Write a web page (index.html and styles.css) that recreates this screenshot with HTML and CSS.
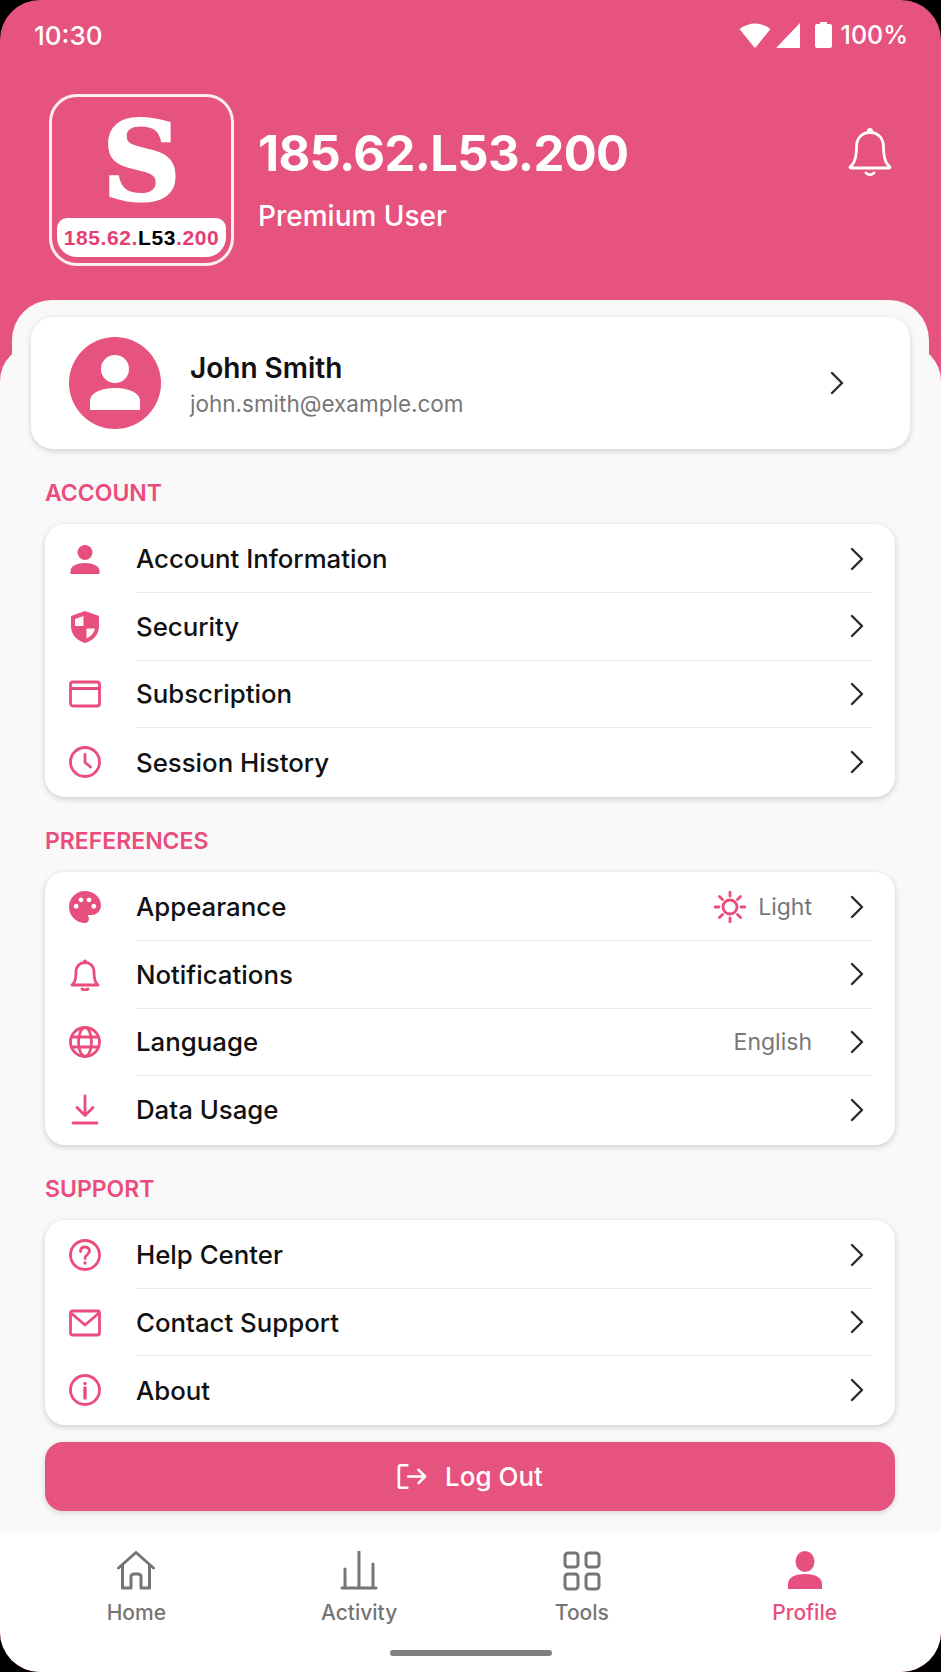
FILE: index.html
```html
<!DOCTYPE html>
<html lang="en">
<head>
    <meta charset="UTF-8">
    <meta name="viewport" content="width=device-width, initial-scale=1.0">
    <title>Profile</title>
    <link rel="stylesheet" href="styles.css">
</head>
<body>
    <div class="phone">
        <header class="header">
            <div class="status-bar">
                <span class="status-time">10:30</span>
                <div class="status-icons">
                    <svg width="32" height="26" viewBox="0 0 32 26"><path class="fill" d="M0.5 7 Q16 -4 31.5 7 L17 25 Q16 26 15 25 Z"/></svg>
                    <svg width="24" height="25" viewBox="0 0 24 25"><path class="fill" d="M24 0 V25 H1 Q0 25 1 24 Z"/></svg>
                    <svg class="battery" width="17" height="26" viewBox="0 0 17 26"><path class="fill" d="M5 2 V1 Q5 0 6 0 H11 Q12 0 12 1 V2 H15 Q17 2 17 4 V24 Q17 26 15 26 H2 Q0 26 0 24 V4 Q0 2 2 2 Z"/></svg>
                    <span>100%</span>
                </div>
            </div>
            <div class="brand">
                <div class="logo">
                    <div class="logo-letter">S</div>
                    <div class="logo-pill">185.62.<b>L53</b>.200</div>
                </div>
                <div class="brand-text">
                    <h1>185.62.L53.200</h1>
                    <p>Premium User</p>
                </div>
                <svg class="bell-top" width="44" height="50" viewBox="0 0 44 50">
                    <path class="line-white" d="M2 40 Q3 39 4.500 37.500 C8 33 8.500 28 8.500 20 C8.500 11 14 5.500 22 5.500 S35.500 11 35.500 20 C35.500 28 36 33 39.500 37.500 Q41 39 42 40 Q42 41 41 41 H3 Q2 41 2 40 Z"/>
                    <circle class="fill" cx="22" cy="4" r="3"/>
                    <path class="line-white" d="M18 46 Q22 49.500 26 46"/>
                </svg>
            </div>
        </header>

        <main class="sheet">
            <div class="profile-card">
                <div class="avatar">
                    <svg width="52" height="55" viewBox="0 0 52 55">
                        <ellipse class="fill" cx="26" cy="14" rx="14" ry="14"/>
                        <path class="fill" d="M1 55 V46 C1 38 12 33 26 33 S51 38 51 46 V55 Z"/>
                    </svg>
                </div>
                <div class="profile-text">
                    <div class="profile-name">John Smith</div>
                    <div class="profile-email">john.smith@example.com</div>
                </div>
                <svg class="chevron" viewBox="0 0 14 24"><path d="M2 2 L12 12 L2 22"/></svg>
            </div>

            <h2 class="section-label">ACCOUNT</h2>
            <section class="card">
                <div class="row">
                    <svg class="icon" viewBox="0 0 32 32"><circle class="solid" cx="16" cy="9.500" r="7.500"/><path class="solid" d="M1.500 31 V28 C1.500 23 8 20 16 20 S30.500 23 30.500 28 V31 Z"/></svg>
                    <div class="row-body"><span class="row-title">Account Information</span><svg class="chevron" viewBox="0 0 14 24"><path d="M2 2 L12 12 L2 22"/></svg></div>
                </div>
                <div class="row">
                    <svg class="icon" viewBox="0 0 32 32"><path class="solid" d="M16 0 L30 5 V15 C30 24 24 29.500 16 32 C8 29.500 2 24 2 15 V5 Z"/><path class="knock" d="M14.500 5 L6 8 V15 H14.500 Z M17.500 17.500 H26 C25 22 22 25.500 17.500 27.500 Z"/></svg>
                    <div class="row-body"><span class="row-title">Security</span><svg class="chevron" viewBox="0 0 14 24"><path d="M2 2 L12 12 L2 22"/></svg></div>
                </div>
                <div class="row">
                    <svg class="icon" viewBox="0 0 32 32"><rect class="line" x="1.500" y="4" width="29" height="24" rx="2.500"/><path class="line" d="M1.500 10.500 H30.500"/></svg>
                    <div class="row-body"><span class="row-title">Subscription</span><svg class="chevron" viewBox="0 0 14 24"><path d="M2 2 L12 12 L2 22"/></svg></div>
                </div>
                <div class="row">
                    <svg class="icon" viewBox="0 0 32 32"><circle class="line" cx="16" cy="16" r="14.500"/><path class="line" d="M16 8.500 V16.500 L21.500 21"/></svg>
                    <div class="row-body"><span class="row-title">Session History</span><svg class="chevron" viewBox="0 0 14 24"><path d="M2 2 L12 12 L2 22"/></svg></div>
                </div>
            </section>

            <h2 class="section-label">PREFERENCES</h2>
            <section class="card">
                <div class="row">
                    <svg class="icon" viewBox="2 2 20 20"><path class="solid" d="M12 2C6.490 2 2 6.490 2 12s4.490 10 10 10c1.380 0 2.500-1.120 2.500-2.500 0-.610-.230-1.200-.640-1.670-.080-.100-.130-.210-.130-.330 0-.280.220-.500.500-.500H16c3.310 0 6-2.690 6-6 0-4.960-4.490-9-10-9zm5.500 11c-.830 0-1.500-.670-1.500-1.500s.670-1.500 1.500-1.500 1.500.670 1.500 1.500-.670 1.500-1.500 1.500zm-3-4c-.830 0-1.500-.670-1.500-1.500S13.670 6 14.500 6s1.500.670 1.500 1.500S15.330 9 14.500 9zM5 11.500c0-.830.670-1.500 1.500-1.500s1.500.670 1.500 1.500S7.330 13 6.500 13 5 12.330 5 11.500zm6-4c0 .830-.670 1.500-1.500 1.500S8 8.330 8 7.500 8.670 6 9.500 6s1.500.670 1.500 1.500z"/></svg>
                    <div class="row-body">
                        <span class="row-title">Appearance</span>
                        <svg class="sun" viewBox="0 0 32 32"><circle class="line" cx="16" cy="16" r="7"/><path class="line" d="M16 1 V5 M16 27 V31 M1 16 H5 M27 16 H31 M5.500 5.500 L8.500 8.500 M23.500 23.500 L26.500 26.500 M5.500 26.500 L8.500 23.500 M23.500 8.500 L26.500 5.500"/></svg>
                        <span class="row-value">Light</span>
                        <svg class="chevron" viewBox="0 0 14 24"><path d="M2 2 L12 12 L2 22"/></svg>
                    </div>
                </div>
                <div class="row">
                    <svg class="icon" viewBox="0 0 32 32"><path class="line" d="M3 26 Q7 23 7 13 C7 7 11 3.500 16 3.500 S25 7 25 13 Q25 23 29 26 Z"/><circle class="solid" cx="16" cy="2.500" r="2"/><path class="line" d="M13 30 Q16 32 19 30"/></svg>
                    <div class="row-body"><span class="row-title">Notifications</span><svg class="chevron" viewBox="0 0 14 24"><path d="M2 2 L12 12 L2 22"/></svg></div>
                </div>
                <div class="row">
                    <svg class="icon" viewBox="0 0 32 32"><circle class="line" cx="16" cy="16" r="14.500"/><ellipse class="line" cx="16" cy="16" rx="6.500" ry="14.500"/><path class="line" d="M2.500 11 H29.500 M2.500 21 H29.500"/></svg>
                    <div class="row-body">
                        <span class="row-title">Language</span>
                        <span class="row-value">English</span>
                        <svg class="chevron" viewBox="0 0 14 24"><path d="M2 2 L12 12 L2 22"/></svg>
                    </div>
                </div>
                <div class="row">
                    <svg class="icon" viewBox="0 0 32 32"><path class="line" d="M16 2 V21 M8 13.500 L16 21.500 L24 13.500 M4 29 H28"/></svg>
                    <div class="row-body"><span class="row-title">Data Usage</span><svg class="chevron" viewBox="0 0 14 24"><path d="M2 2 L12 12 L2 22"/></svg></div>
                </div>
            </section>

            <h2 class="section-label">SUPPORT</h2>
            <section class="card">
                <div class="row">
                    <svg class="icon" viewBox="0 0 32 32"><circle class="line" cx="16" cy="16" r="14.500"/><path class="line" d="M11.500 12.500 C11.500 9.500 13.500 8 16 8 S20.500 9.500 20.500 12 C20.500 15.500 16 15.500 16 19.500"/><circle class="solid" cx="16" cy="24" r="1.700"/></svg>
                    <div class="row-body"><span class="row-title">Help Center</span><svg class="chevron" viewBox="0 0 14 24"><path d="M2 2 L12 12 L2 22"/></svg></div>
                </div>
                <div class="row">
                    <svg class="icon" viewBox="0 0 32 32"><rect class="line" x="1.500" y="4" width="29" height="24" rx="2"/><path class="line" d="M2 6 L16 18 L30 6"/></svg>
                    <div class="row-body"><span class="row-title">Contact Support</span><svg class="chevron" viewBox="0 0 14 24"><path d="M2 2 L12 12 L2 22"/></svg></div>
                </div>
                <div class="row">
                    <svg class="icon" viewBox="0 0 32 32"><circle class="line" cx="16" cy="16" r="14.500"/><circle class="solid" cx="16" cy="9.500" r="1.800"/><path class="line thick" d="M16 14 V24"/></svg>
                    <div class="row-body"><span class="row-title">About</span><svg class="chevron" viewBox="0 0 14 24"><path d="M2 2 L12 12 L2 22"/></svg></div>
                </div>
            </section>

            <button class="logout">
                <svg width="30" height="27" viewBox="0 0 32 28"><path class="line-white" d="M11 2 H4 Q2 2 2 4 V24 Q2 26 4 26 H11 M12 14 H30 M23 7 L30 14 L23 21"/></svg>
                Log Out
            </button>
        </main>

        <nav class="bottom-nav">
            <div class="nav-list">
                <div class="nav-item">
                    <svg class="nav-icon" viewBox="0 0 40 40"><path class="line-gray" d="M2.500 17 L20 1.500 L37.500 17 M6.500 14 V37 H15 V26 Q15 23 18 23 H22 Q25 23 25 26 V37 H33.500 V14"/></svg>
                    <span>Home</span>
                </div>
                <div class="nav-item">
                    <svg class="nav-icon" viewBox="0 0 40 40"><path class="line-gray" d="M3 37 H37 M6 18 V37 M20 1 V37 M34 13 V37"/></svg>
                    <span>Activity</span>
                </div>
                <div class="nav-item">
                    <svg class="nav-icon" viewBox="0 0 40 40"><rect class="line-gray" x="3" y="2" width="13" height="14" rx="3"/><rect class="line-gray" x="24" y="2" width="13" height="14" rx="3"/><rect class="line-gray" x="3" y="23" width="13" height="15" rx="3"/><rect class="line-gray" x="24" y="23" width="13" height="15" rx="3"/></svg>
                    <span>Tools</span>
                </div>
                <div class="nav-item active">
                    <svg class="nav-icon" viewBox="0 0 40 40"><ellipse class="solid" cx="20" cy="10.500" rx="9.500" ry="10.500"/><path class="solid" d="M3 38 V33 C3 27 9 23 20 23 S37 27 37 33 V38 Z"/></svg>
                    <span>Profile</span>
                </div>
            </div>
            <div class="home-indicator"></div>
        </nav>
    </div>
</body>
</html>
```

FILE: styles.css
```css
body {
    margin: 0;
    background-color: #000;
    font-family: 'Inter', 'Noto Sans', sans-serif;
    color: #111;
}

.phone {
    width: 941px;
    height: 1672px;
    background-color: #e7537f;
    border-radius: 40px;
    overflow: hidden;
    display: flex;
    flex-direction: column;
}

/* header */
.header {
    height: 345px;
    flex-shrink: 0;
    color: white;
}

.status-bar {
    display: flex;
    justify-content: space-between;
    align-items: center;
    height: 26px;
    padding: 22px 33px 0 34px;
    font-size: 25px;
    font-weight: 500;
}

.status-time {
    font-size: 26px;
}

.status-icons {
    display: flex;
    align-items: center;
    gap: 5px;
}

.status-icons .battery {
    margin: 0 4px 0 10px;
}

.brand {
    display: flex;
    align-items: center;
    margin-top: 46px;
    padding: 0 49px;
}

.logo {
    width: 179px;
    height: 166px;
    flex-shrink: 0;
    border: 3px solid rgba(255, 255, 255, 0.9);
    border-radius: 28px;
    display: flex;
    flex-direction: column;
    align-items: center;
}

.logo-letter {
    height: 114px;
    padding-top: 7px;
    font-family: 'DejaVu Serif', serif;
    font-weight: bold;
    font-size: 108px;
    line-height: 114px;
    color: white;
    -webkit-text-stroke: 3px white;
}

.logo-pill {
    width: 169px;
    height: 39px;
    background-color: white;
    border-radius: 10px 10px 20px 20px;
    text-align: center;
    font-family: 'Liberation Sans', sans-serif;
    font-weight: bold;
    font-size: 21px;
    line-height: 39px;
    letter-spacing: 0.6px;
    color: #e63e72;
}

.logo-pill b {
    color: #000;
}

.brand-text {
    flex: 1;
    margin: 0 0 4px 24px;
}

.brand-text h1 {
    margin: 0;
    font-size: 49px;
    font-weight: 700;
    line-height: 58px;
    letter-spacing: -0.7px;
}

.brand-text p {
    margin: 17px 0 0;
    font-size: 28px;
    font-weight: 500;
    line-height: 32px;
}

.bell-top {
    align-self: flex-start;
    margin-top: 33px;
}

.fill {
    fill: white;
}

.line-white {
    fill: none;
    stroke: white;
    stroke-width: 2.8;
    stroke-linecap: round;
    stroke-linejoin: round;
}

/* sheet with the lists */
.sheet {
    flex: 1;
    position: relative;
    background-color: #f9f9f9;
    border-radius: 36px 36px 0 0;
    padding: 0 46px 0 45px;
}

.sheet::before {
    content: '';
    position: absolute;
    top: -45px;
    left: 12px;
    right: 12px;
    height: 120px;
    background-color: #f9f9f9;
    border-radius: 40px 40px 0 0;
}

.profile-card {
    position: relative;
    display: flex;
    align-items: center;
    height: 132px;
    margin: -28px -15px 0 -14px;
    padding: 0 66px 0 38px;
    background-color: white;
    border-radius: 22px;
    box-shadow: 0 2px 6px rgba(0, 0, 0, 0.16);
}

.avatar {
    width: 92px;
    height: 92px;
    flex-shrink: 0;
    border-radius: 50%;
    background-color: #e7537f;
    display: flex;
    align-items: flex-end;
    justify-content: center;
}

.avatar svg {
    margin-bottom: 19px;
}

.profile-text {
    flex: 1;
    margin-left: 29px;
    padding-top: 4px;
}

.profile-name {
    font-size: 28px;
    font-weight: 600;
    line-height: 32px;
}

.profile-email {
    margin-top: 6px;
    font-size: 22.5px;
    line-height: 28px;
    color: #777;
}

.chevron {
    width: 14px;
    height: 24px;
    flex-shrink: 0;
    fill: none;
    stroke: #2b2b2b;
    stroke-width: 2.4;
    stroke-linecap: round;
    stroke-linejoin: round;
}

.section-label {
    margin: 31px 0 18px;
    font-size: 23px;
    font-weight: 600;
    line-height: 26px;
    color: #ea4c7c;
}

.card {
    background-color: white;
    border-radius: 20px;
    box-shadow: 0 2px 6px rgba(0, 0, 0, 0.18);
    padding: 1.5px 0 1px;
}

.row {
    display: flex;
    align-items: center;
    height: 67.6px;
    padding: 0 23px 0 24px;
}

.icon {
    width: 32px;
    height: 32px;
    flex-shrink: 0;
    margin-right: 35px;
}

.solid {
    fill: #e7507e;
}

.knock {
    fill: white;
    opacity: 0.95;
}

.line {
    fill: none;
    stroke: #ea4c7c;
    stroke-width: 2.8;
    stroke-linecap: round;
    stroke-linejoin: round;
}

.line.thick {
    stroke-width: 3.4;
}

.row-body {
    flex: 1;
    align-self: stretch;
    display: flex;
    align-items: center;
    padding-right: 8px;
    border-bottom: 1px solid #ebebeb;
}

.row:last-child .row-body {
    border-bottom: none;
}

.row-title {
    flex: 1;
    font-size: 25.8px;
    font-weight: 500;
}

.row-value {
    margin-right: 38px;
    font-size: 23px;
    color: #777;
}

.sun {
    width: 32px;
    height: 32px;
    margin-right: 12px;
}

.logout {
    display: flex;
    align-items: center;
    justify-content: center;
    gap: 18px;
    width: 100%;
    height: 69px;
    margin-top: 17px;
    border: none;
    border-radius: 18px;
    background-color: #e7537f;
    color: white;
    font-family: inherit;
    font-size: 26px;
    font-weight: 500;
    box-shadow: 0 2px 6px rgba(0, 0, 0, 0.14);
}

/* bottom navigation */
.bottom-nav {
    height: 139px;
    flex-shrink: 0;
    position: relative;
    background-color: white;
}

.nav-list {
    display: grid;
    grid-template-columns: repeat(4, 1fr);
    padding: 18px 25px 0;
}

.nav-item {
    display: flex;
    flex-direction: column;
    align-items: center;
    font-size: 21px;
    font-weight: 500;
    line-height: 26px;
    color: #757575;
}

.nav-item.active {
    color: #ea4c7c;
}

.nav-icon {
    width: 40px;
    height: 40px;
    margin-bottom: 9px;
}

.line-gray {
    fill: none;
    stroke: #757575;
    stroke-width: 3;
    stroke-linejoin: round;
    stroke-linecap: round;
}

.home-indicator {
    position: absolute;
    left: 390px;
    bottom: 16px;
    width: 162px;
    height: 6px;
    border-radius: 3px;
    background-color: #808080;
}
```
